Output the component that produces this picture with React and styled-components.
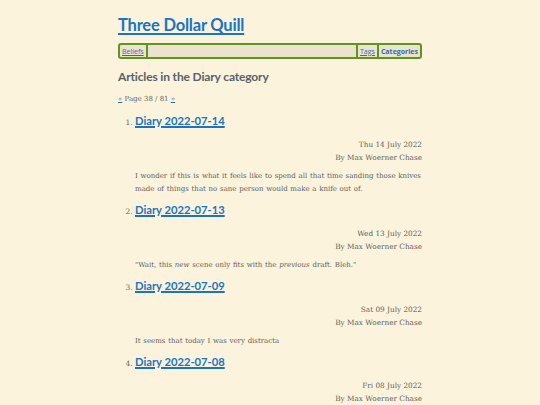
import React from 'react';
import styled, { createGlobalStyle } from 'styled-components';

const GlobalStyle = createGlobalStyle`
  html, body {
    margin: 0;
    padding: 0;
    background: #fbf3dc;
  }
  body {
    font-family: "DejaVu Serif", serif;
    color: #555a5e;
  }
`;

const Page = styled.div`
  width: 304px;
  margin: 0 auto;
  padding-top: 15px;
`;

const SiteTitle = styled.a`
  display: inline-block;
  font-family: Lato, sans-serif;
  font-weight: 700;
  font-size: 16.5px;
  letter-spacing: -0.2px;
  line-height: 20px;
  color: #1a73c4;
  text-decoration: underline;
  text-decoration-thickness: 2px;
  text-underline-offset: 2px;
`;

const Nav = styled.nav`
  display: flex;
  align-items: stretch;
  margin-top: 8px;
  height: 12px;
  border: 2px solid #5f9420;
  border-radius: 3px;
  background: #ebe3cc;
  font-family: "Open Sans", sans-serif;
  font-size: 7px;
`;

const NavLink = styled.a`
  display: flex;
  align-items: center;
  padding: 0 2px;
  color: #2d6fb0;
  font-weight: ${p => (p.$bold ? 700 : 400)};
  text-decoration: ${p => (p.$bold ? 'none' : 'underline')};
  border-left: ${p => (p.$sepLeft ? '2px solid #5f9420' : 'none')};
  border-right: ${p => (p.$sepRight ? '2px solid #5f9420' : 'none')};
`;

const Spacer = styled.div`
  flex: 1;
`;

const Heading = styled.h2`
  margin: 10px 0 0;
  font-family: Lato, sans-serif;
  font-weight: 700;
  font-size: 12px;
  letter-spacing: -0.15px;
  line-height: 16px;
  color: #59626a;
`;

const Pager = styled.div`
  margin-top: 10px;
  font-size: 7px;
  color: #666;
  a {
    color: #2d6fb0;
  }
`;

const List = styled.ol`
  margin: 7px 0 0;
  padding-left: 17px;
  li::marker {
    font-size: 7.5px;
    color: #666;
  }
`;

const Item = styled.li`
  margin-bottom: 3px;
`;

const ItemTitle = styled.a`
  font-family: Lato, sans-serif;
  font-weight: 700;
  font-size: 11.2px;
  line-height: 16px;
  color: #1a73c4;
  text-decoration: underline;
  text-decoration-thickness: 1.5px;
`;

const Meta = styled.div`
  margin-top: 9px;
  text-align: right;
  font-size: 7.3px;
  line-height: 13px;
  color: #5f5f5f;
`;

const Excerpt = styled.p`
  margin: 6px 0 0;
  font-size: 7px;
  word-spacing: 0.5px;
  line-height: 13px;
  color: #5f5f5f;
`;

const posts = [
  {
    title: 'Diary 2022-07-14',
    date: 'Thu 14 July 2022',
    excerpt: 'I wonder if this is what it feels like to spend all that time sanding those knives made of things that no sane person would make a knife out of.',
  },
  {
    title: 'Diary 2022-07-13',
    date: 'Wed 13 July 2022',
    excerpt: (
      <>
        "Wait, this <em>new</em> scene only fits with the <em>previous</em> draft. Bleh."
      </>
    ),
  },
  {
    title: 'Diary 2022-07-09',
    date: 'Sat 09 July 2022',
    excerpt: 'It seems that today I was very distracta',
  },
  {
    title: 'Diary 2022-07-08',
    date: 'Fri 08 July 2022',
    excerpt: 'Today I did some stuff.',
  },
];

export default function App() {
  return (
    <>
      <GlobalStyle />
      <Page>
        <SiteTitle href="#">Three Dollar Quill</SiteTitle>
        <Nav>
          <NavLink href="#" $sepRight>Beliefs</NavLink>
          <Spacer />
          <NavLink href="#" $sepLeft $sepRight>Tags</NavLink>
          <NavLink href="#" $bold>Categories</NavLink>
        </Nav>
        <Heading>Articles in the Diary category</Heading>
        <Pager>
          <a href="#">«</a> Page 38 / 81 <a href="#">»</a>
        </Pager>
        <List>
          {posts.map(p => (
            <Item key={p.title}>
              <ItemTitle href="#">{p.title}</ItemTitle>
              <Meta>
                {p.date}
                <br />
                By Max Woerner Chase
              </Meta>
              <Excerpt>{p.excerpt}</Excerpt>
            </Item>
          ))}
        </List>
      </Page>
    </>
  );
}
